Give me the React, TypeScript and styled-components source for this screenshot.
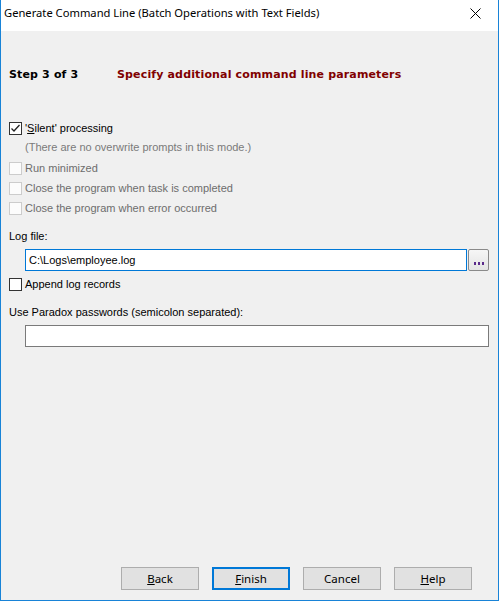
import styled, { createGlobalStyle } from "styled-components";

const GlobalStyle = createGlobalStyle`
  html, body {
    margin: 0;
    padding: 0;
    background: #f0f0f0;
  }
  body {
    font-family: "Liberation Sans", Arial, sans-serif;
    font-size: 11px;
    color: #000;
  }
`;

const Window = styled.div`
  box-sizing: border-box;
  width: 499px;
  height: 601px;
  display: flex;
  flex-direction: column;
  border: 1px solid #1883d7;
  border-top: none;
  background: #f0f0f0;
  overflow: hidden;
`;

const TitleBar = styled.div`
  height: 31px;
  flex: none;
  background: #fff;
  display: flex;
  align-items: flex-start;
  justify-content: space-between;
  padding: 5px 0 0 3px;
  box-sizing: border-box;
`;

const TitleText = styled.div`
  font-family: "Noto Sans", sans-serif;
  font-size: 11.2px;
  line-height: 16px;
`;

const CloseBox = styled.div`
  width: 46px;
  height: 20px;
  display: flex;
  align-items: center;
  justify-content: center;
  margin-top: -2px;
`;

const Content = styled.div`
  flex: 1;
  display: flex;
  flex-direction: column;
  padding: 0 9px 10px 8px;
`;

const StepRow = styled.div`
  margin-top: 35px;
  display: flex;
  height: 16px;
  align-items: center;
  font-family: "DejaVu Sans", sans-serif;
  font-weight: bold;
  font-size: 11px;
  letter-spacing: 0.15px;
`;

const StepNo = styled.span`
  width: 108px;
`;

const StepTitle = styled.span`
  color: #800000;
`;

const CheckRow = styled.label<{ $mt?: number; $disabled?: boolean }>`
  display: flex;
  align-items: center;
  height: 20px;
  margin-top: ${(p) => p.$mt ?? 0}px;
  color: ${(p) => (p.$disabled ? "#6d6d6d" : "#000")};
`;

const Box = styled.span<{ $disabled?: boolean }>`
  box-sizing: border-box;
  width: 13px;
  height: 13px;
  border: 1px solid ${(p) => (p.$disabled ? "#cccccc" : "#333333")};
  background: ${(p) => (p.$disabled ? "#fcfcfc" : "#fff")};
  margin-right: 3px;
  display: flex;
  align-items: center;
  justify-content: center;
`;

const Note = styled.div`
  margin-left: 16px;
  height: 18px;
  line-height: 18px;
  color: #7a7a7a;
`;

const Label = styled.div<{ $mt: number }>`
  margin-top: ${(p) => p.$mt}px;
  height: 16px;
  line-height: 16px;
`;

const FieldRow = styled.div`
  margin-top: 5px;
  margin-left: 16px;
  display: flex;
  height: 22px;
`;

const TextBox = styled.div<{ $focused?: boolean }>`
  flex: 1;
  box-sizing: border-box;
  height: 22px;
  background: #fff;
  border: 1px solid ${(p) => (p.$focused ? "#0078d7" : "#7a7a7a")};
  padding: 0 3px;
  line-height: 20px;
`;

const BrowseButton = styled.div`
  box-sizing: border-box;
  width: 21px;
  height: 22px;
  margin-left: 1px;
  border: 1px solid #8a8a8a;
  border-radius: 2px;
  background: linear-gradient(#f6f6f6, #e4e4e4);
  display: flex;
  align-items: flex-end;
  justify-content: center;
  padding-bottom: 5px;
  gap: 2px;
`;

const Dot = styled.span`
  width: 2px;
  height: 3px;
  background: #5a2a8a;
`;

const Buttons = styled.div`
  margin-top: auto;
  display: flex;
  gap: 13px;
  padding-left: 112px;
`;

const Button = styled.div<{ $primary?: boolean }>`
  box-sizing: border-box;
  width: 78px;
  height: 23px;
  display: flex;
  align-items: center;
  justify-content: center;
  font-family: "Noto Sans", sans-serif;
  font-size: 11.5px;
  background: #e1e1e1;
  border: ${(p) => (p.$primary ? "2px solid #0078d7" : "1px solid #adadad")};
`;

const Check = () => (
  <svg width="11" height="11" viewBox="0 0 11 11">
    <path d="M1.5 5.5 L4 8 L9.5 2" fill="none" stroke="#222" strokeWidth="1.3" />
  </svg>
);

export default function App() {
  return (
    <>
      <GlobalStyle />
      <Window>
        <TitleBar>
          <TitleText>Generate Command Line (Batch Operations with Text Fields)</TitleText>
          <CloseBox>
            <svg width="11" height="11" viewBox="0 0 11 11">
              <path d="M0.5 0.5 L10.5 10.5 M10.5 0.5 L0.5 10.5" stroke="#000" strokeWidth="1" />
            </svg>
          </CloseBox>
        </TitleBar>
        <Content>
          <StepRow>
            <StepNo>Step 3 of 3</StepNo>
            <StepTitle>Specify additional command line parameters</StepTitle>
          </StepRow>

          <CheckRow $mt={36}>
            <Box>
              <Check />
            </Box>
            <span>
              '<u>S</u>ilent' processing
            </span>
          </CheckRow>
          <Note>(There are no overwrite prompts in this mode.)</Note>
          <CheckRow $mt={2} $disabled>
            <Box $disabled />
            Run minimized
          </CheckRow>
          <CheckRow $disabled>
            <Box $disabled />
            Close the program when task is completed
          </CheckRow>
          <CheckRow $disabled>
            <Box $disabled />
            Close the program when error occurred
          </CheckRow>

          <Label $mt={10}>Log file:</Label>
          <FieldRow>
            <TextBox $focused>C:\Logs\employee.log</TextBox>
            <BrowseButton>
              <Dot />
              <Dot />
              <Dot />
            </BrowseButton>
          </FieldRow>
          <CheckRow $mt={3}>
            <Box />
            Append log records
          </CheckRow>

          <Label $mt={10}>Use Paradox passwords (semicolon separated):</Label>
          <FieldRow>
            <TextBox />
          </FieldRow>

          <Buttons>
            <Button>
              <u>B</u>ack
            </Button>
            <Button $primary>
              <u>F</u>inish
            </Button>
            <Button>Cancel</Button>
            <Button>
              <u>H</u>elp
            </Button>
          </Buttons>
        </Content>
      </Window>
    </>
  );
}
